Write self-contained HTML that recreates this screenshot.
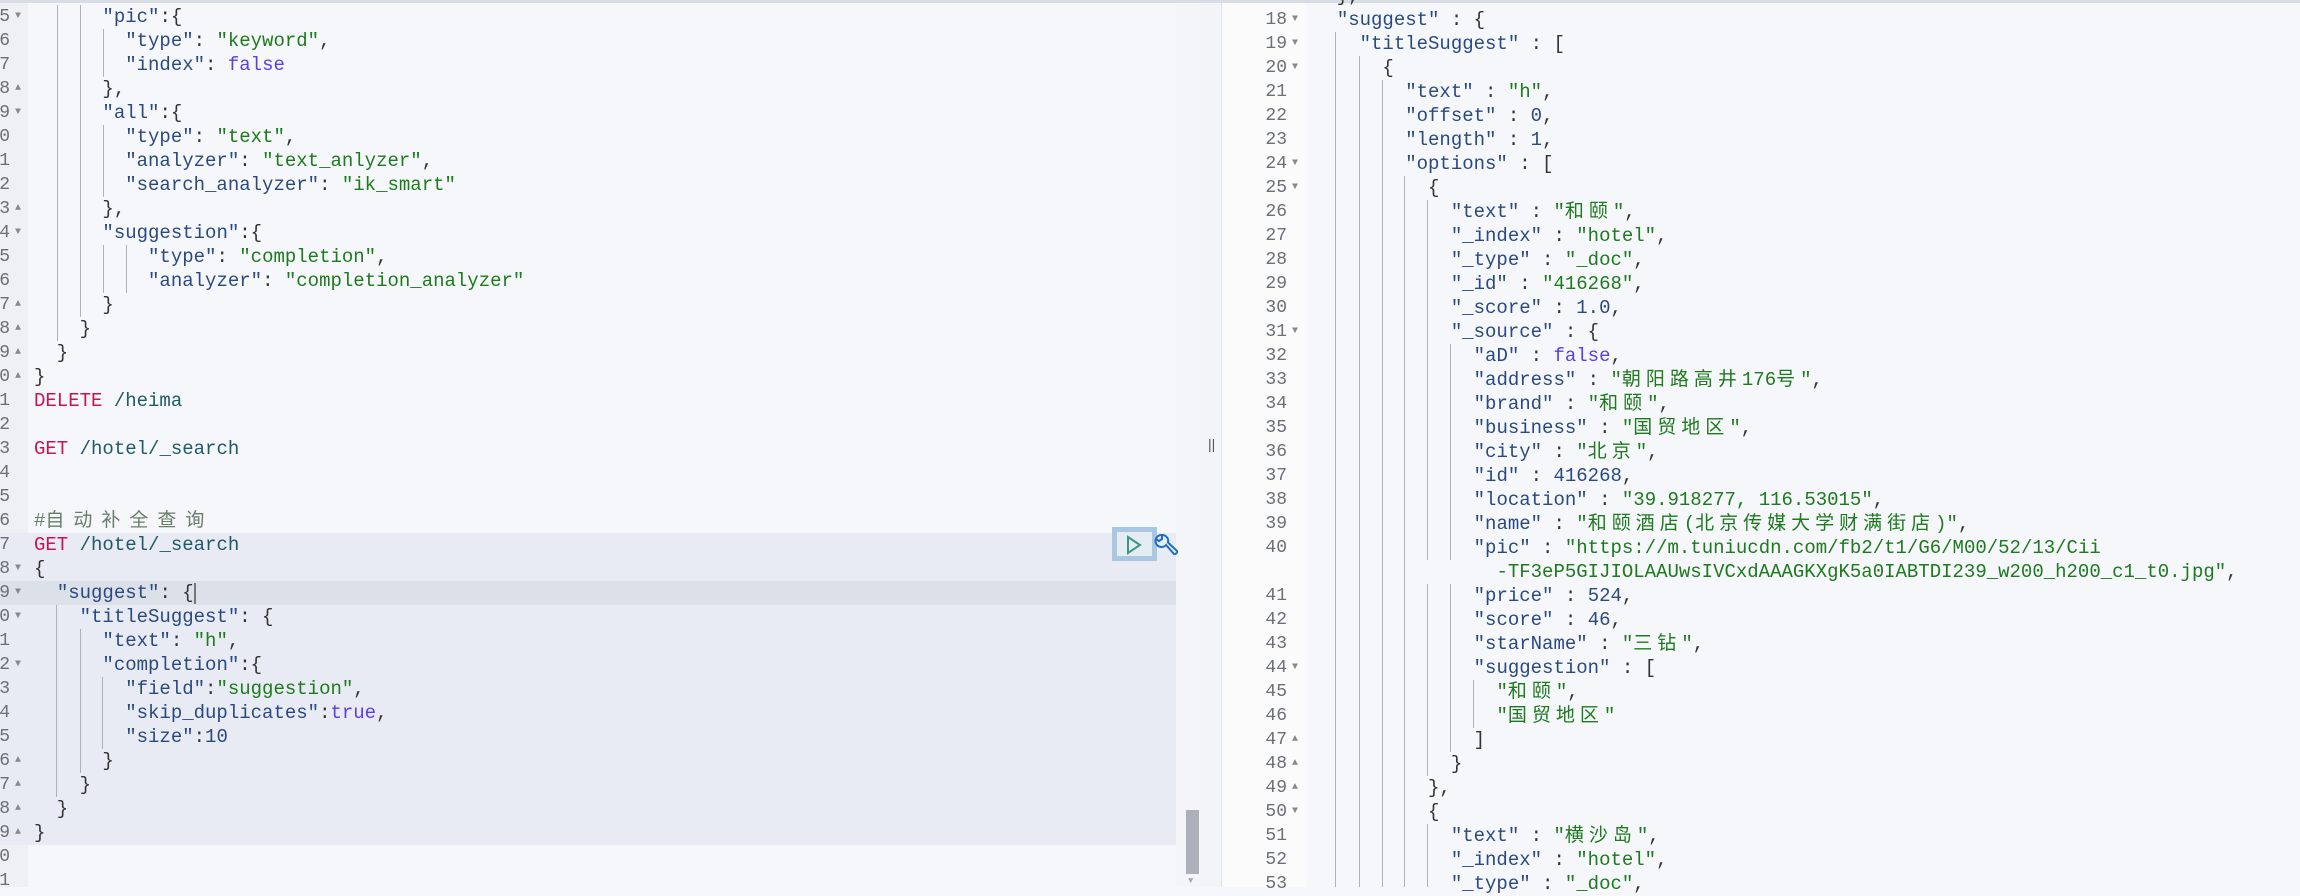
<!DOCTYPE html>
<html><head><meta charset="utf-8"><style>
*{margin:0;padding:0;box-sizing:border-box}
body{width:2300px;height:887px;overflow:hidden;background:#f5f7fa;position:relative;font-family:"Liberation Mono","Noto Sans CJK SC",monospace;font-size:19px;color:#333}
.a{position:absolute}
.l{position:absolute;height:24px;line-height:24px;white-space:pre}
.k{color:#2a4a7f}.s{color:#1d7a1d}.c{color:#6a7d6a}.b{color:#5b3ee6}.m{color:#c4155a}.p{color:#1e5a66}.n{color:#2a4a7f}
.z{letter-spacing:5px}
.g{position:absolute;width:1px;background:#aeb2ba}
.num{position:absolute;height:24px;line-height:24px;color:#6b6f76;text-align:right;width:60px;font-size:18px}
.f{position:absolute;color:#888;font-size:10px;height:24px;line-height:24px}
</style></head><body>
<div class="a" style="left:0;top:0;width:2300px;height:3px;background:#d8dce4"></div>
<div class="a" style="left:0;top:3px;width:28px;height:884px;background:#eef0f4"></div>
<div class="a" style="left:0;top:533px;width:1176px;height:312px;background:#e8ebf3"></div>
<div class="a" style="left:0;top:581px;width:1176px;height:24px;background:#dce0e9"></div>
<div class="a" style="left:1176px;top:3px;width:24px;height:884px;background:#f3f5f8"></div>
<div class="a" style="left:1186px;top:810px;width:13px;height:64px;background:#acb0b8"></div>
<div class="a" style="left:1188px;top:876px;color:#aaa;font-size:9px">▼</div>
<div class="a" style="left:1200px;top:3px;width:22px;height:884px;background:#f3f4f7;border-right:1px solid #e0e3e8"></div>
<div class="a" style="left:1208px;top:436px;font-size:14px;color:#555;font-family:'Liberation Sans',sans-serif">||</div>
<div class="a" style="left:1223px;top:3px;width:84px;height:884px;background:#fbfbfc"></div>

<div class="a" style="left:-50px;top:0;width:0;height:0">
<div class="num" style="left:0;top:5px">15</div><div class="num" style="left:0;top:29px">16</div><div class="num" style="left:0;top:53px">17</div><div class="num" style="left:0;top:77px">18</div><div class="num" style="left:0;top:101px">19</div><div class="num" style="left:0;top:125px">20</div><div class="num" style="left:0;top:149px">21</div><div class="num" style="left:0;top:173px">22</div><div class="num" style="left:0;top:197px">23</div><div class="num" style="left:0;top:221px">24</div><div class="num" style="left:0;top:245px">25</div><div class="num" style="left:0;top:269px">26</div><div class="num" style="left:0;top:293px">27</div><div class="num" style="left:0;top:317px">28</div><div class="num" style="left:0;top:341px">29</div><div class="num" style="left:0;top:365px">30</div><div class="num" style="left:0;top:389px">31</div><div class="num" style="left:0;top:413px">32</div><div class="num" style="left:0;top:437px">33</div><div class="num" style="left:0;top:461px">34</div><div class="num" style="left:0;top:485px">35</div><div class="num" style="left:0;top:509px">36</div><div class="num" style="left:0;top:533px">37</div><div class="num" style="left:0;top:557px">38</div><div class="num" style="left:0;top:581px">39</div><div class="num" style="left:0;top:605px">40</div><div class="num" style="left:0;top:629px">41</div><div class="num" style="left:0;top:653px">42</div><div class="num" style="left:0;top:677px">43</div><div class="num" style="left:0;top:701px">44</div><div class="num" style="left:0;top:725px">45</div><div class="num" style="left:0;top:749px">46</div><div class="num" style="left:0;top:773px">47</div><div class="num" style="left:0;top:797px">48</div><div class="num" style="left:0;top:821px">49</div><div class="num" style="left:0;top:845px">50</div><div class="num" style="left:0;top:869px">51</div>
</div>
<div class="f" style="left:15px;top:5px">▼</div><div class="f" style="left:15px;top:77px">▲</div><div class="f" style="left:15px;top:101px">▼</div><div class="f" style="left:15px;top:197px">▲</div><div class="f" style="left:15px;top:221px">▼</div><div class="f" style="left:15px;top:293px">▲</div><div class="f" style="left:15px;top:317px">▲</div><div class="f" style="left:15px;top:341px">▲</div><div class="f" style="left:15px;top:365px">▲</div><div class="f" style="left:15px;top:557px">▼</div><div class="f" style="left:15px;top:581px">▼</div><div class="f" style="left:15px;top:605px">▼</div><div class="f" style="left:15px;top:653px">▼</div><div class="f" style="left:15px;top:749px">▲</div><div class="f" style="left:15px;top:773px">▲</div><div class="f" style="left:15px;top:797px">▲</div><div class="f" style="left:15px;top:821px">▲</div>

<div class="g" style="left:57px;top:5px;height:336px"></div>
<div class="g" style="left:80px;top:5px;height:312px"></div>
<div class="g" style="left:103px;top:29px;height:48px"></div>
<div class="g" style="left:103px;top:125px;height:72px"></div>
<div class="g" style="left:103px;top:245px;height:48px"></div>
<div class="g" style="left:126px;top:245px;height:48px"></div>
<div class="g" style="left:56px;top:605px;height:192px"></div>
<div class="g" style="left:80px;top:629px;height:144px"></div>
<div class="g" style="left:102px;top:677px;height:72px"></div>

<div class="a" style="left:34px;top:0">
<div class="l" style="top:5px">      <span class="k">"pic"</span>:{</div>
<div class="l" style="top:29px">        <span class="k">"type"</span>: <span class="s">"keyword"</span>,</div>
<div class="l" style="top:53px">        <span class="k">"index"</span>: <span class="b">false</span></div>
<div class="l" style="top:77px">      },</div>
<div class="l" style="top:101px">      <span class="k">"all"</span>:{</div>
<div class="l" style="top:125px">        <span class="k">"type"</span>: <span class="s">"text"</span>,</div>
<div class="l" style="top:149px">        <span class="k">"analyzer"</span>: <span class="s">"text_anlyzer"</span>,</div>
<div class="l" style="top:173px">        <span class="k">"search_analyzer"</span>: <span class="s">"ik_smart"</span></div>
<div class="l" style="top:197px">      },</div>
<div class="l" style="top:221px">      <span class="k">"suggestion"</span>:{</div>
<div class="l" style="top:245px">          <span class="k">"type"</span>: <span class="s">"completion"</span>,</div>
<div class="l" style="top:269px">          <span class="k">"analyzer"</span>: <span class="s">"completion_analyzer"</span></div>
<div class="l" style="top:293px">      }</div>
<div class="l" style="top:317px">    }</div>
<div class="l" style="top:341px">  }</div>
<div class="l" style="top:365px">}</div>
<div class="l" style="top:389px"><span class="m">DELETE</span> <span class="p">/heima</span></div>
<div class="l" style="top:437px"><span class="m">GET</span> <span class="p">/hotel/_search</span></div>
<div class="l c" style="top:509px">#<span style="letter-spacing:9px">自动补全查询</span></div>
<div class="l" style="top:533px"><span class="m">GET</span> <span class="p">/hotel/_search</span></div>
<div class="l" style="top:557px">{</div>
<div class="l" style="top:581px">  <span class="k">"suggest"</span>: {</div>
<div class="l" style="top:605px">    <span class="k">"titleSuggest"</span>: {</div>
<div class="l" style="top:629px">      <span class="k">"text"</span>: <span class="s">"h"</span>,</div>
<div class="l" style="top:653px">      <span class="k">"completion"</span>:{</div>
<div class="l" style="top:677px">        <span class="k">"field"</span>:<span class="s">"suggestion"</span>,</div>
<div class="l" style="top:701px">        <span class="k">"skip_duplicates"</span>:<span class="b">true</span>,</div>
<div class="l" style="top:725px">        <span class="k">"size"</span>:<span class="n">10</span></div>
<div class="l" style="top:749px">      }</div>
<div class="l" style="top:773px">    }</div>
<div class="l" style="top:797px">  }</div>
<div class="l" style="top:821px">}</div>
</div>
<div class="a" style="left:194px;top:583px;width:2px;height:21px;background:#777"></div>

<div class="a" style="left:1112px;top:527px;width:45px;height:34px;background:#a9c7e0"></div>
<div class="a" style="left:1117px;top:532px;width:35px;height:24px;background:#e6ecf4"></div>
<svg class="a" style="left:1125px;top:535px" width="18" height="20" viewBox="0 0 18 20"><path d="M3 2 L15 10 L3 18 Z" fill="none" stroke="#3a9a7e" stroke-width="2"/></svg>
<svg class="a" style="left:1153px;top:533px" width="26" height="26" viewBox="0 0 26 26"><path d="M9 2 A6 6 0 1 0 13 12 L21 21 A2.5 2.5 0 0 0 24 18 L15 9.5 A6 6 0 0 0 9 2 L9 6 L6 8 L3 6" fill="none" stroke="#1f6fc0" stroke-width="2"/></svg>

<div class="a" style="left:1236px;top:0;width:0;height:0">
<div class="num" style="left:-9px;top:8px">18</div><div class="num" style="left:-9px;top:32px">19</div><div class="num" style="left:-9px;top:56px">20</div><div class="num" style="left:-9px;top:80px">21</div><div class="num" style="left:-9px;top:104px">22</div><div class="num" style="left:-9px;top:128px">23</div><div class="num" style="left:-9px;top:152px">24</div><div class="num" style="left:-9px;top:176px">25</div><div class="num" style="left:-9px;top:200px">26</div><div class="num" style="left:-9px;top:224px">27</div><div class="num" style="left:-9px;top:248px">28</div><div class="num" style="left:-9px;top:272px">29</div><div class="num" style="left:-9px;top:296px">30</div><div class="num" style="left:-9px;top:320px">31</div><div class="num" style="left:-9px;top:344px">32</div><div class="num" style="left:-9px;top:368px">33</div><div class="num" style="left:-9px;top:392px">34</div><div class="num" style="left:-9px;top:416px">35</div><div class="num" style="left:-9px;top:440px">36</div><div class="num" style="left:-9px;top:464px">37</div><div class="num" style="left:-9px;top:488px">38</div><div class="num" style="left:-9px;top:512px">39</div><div class="num" style="left:-9px;top:536px">40</div><div class="num" style="left:-9px;top:584px">41</div><div class="num" style="left:-9px;top:608px">42</div><div class="num" style="left:-9px;top:632px">43</div><div class="num" style="left:-9px;top:656px">44</div><div class="num" style="left:-9px;top:680px">45</div><div class="num" style="left:-9px;top:704px">46</div><div class="num" style="left:-9px;top:728px">47</div><div class="num" style="left:-9px;top:752px">48</div><div class="num" style="left:-9px;top:776px">49</div><div class="num" style="left:-9px;top:800px">50</div><div class="num" style="left:-9px;top:824px">51</div><div class="num" style="left:-9px;top:848px">52</div><div class="num" style="left:-9px;top:872px">53</div>
</div>
<div class="f" style="left:1292px;top:8px">▼</div><div class="f" style="left:1292px;top:32px">▼</div><div class="f" style="left:1292px;top:56px">▼</div><div class="f" style="left:1292px;top:152px">▼</div><div class="f" style="left:1292px;top:176px">▼</div><div class="f" style="left:1292px;top:320px">▼</div><div class="f" style="left:1292px;top:656px">▼</div><div class="f" style="left:1292px;top:728px">▲</div><div class="f" style="left:1292px;top:752px">▲</div><div class="f" style="left:1292px;top:776px">▲</div><div class="f" style="left:1292px;top:800px">▼</div>

<div class="g" style="left:1335px;top:32px;height:855px"></div>
<div class="g" style="left:1359px;top:56px;height:831px"></div>
<div class="g" style="left:1382px;top:80px;height:807px"></div>
<div class="g" style="left:1404px;top:176px;height:711px"></div>
<div class="g" style="left:1427px;top:200px;height:360px"></div>
<div class="g" style="left:1427px;top:584px;height:192px"></div>
<div class="g" style="left:1427px;top:824px;height:63px"></div>
<div class="g" style="left:1450px;top:344px;height:216px"></div>
<div class="g" style="left:1450px;top:584px;height:168px"></div>
<div class="g" style="left:1473px;top:680px;height:48px"></div>

<div class="a" style="left:1314px;top:0">
<div class="l" style="top:-16px">  },</div>
<div class="l" style="top:8px">  <span class="k">"suggest"</span> : {</div>
<div class="l" style="top:32px">    <span class="k">"titleSuggest"</span> : [</div>
<div class="l" style="top:56px">      {</div>
<div class="l" style="top:80px">        <span class="k">"text"</span> : <span class="s">"h"</span>,</div>
<div class="l" style="top:104px">        <span class="k">"offset"</span> : <span class="n">0</span>,</div>
<div class="l" style="top:128px">        <span class="k">"length"</span> : <span class="n">1</span>,</div>
<div class="l" style="top:152px">        <span class="k">"options"</span> : [</div>
<div class="l" style="top:176px">          {</div>
<div class="l" style="top:200px">            <span class="k">"text"</span> : <span class="s">"<span class="z">和颐</span>"</span>,</div>
<div class="l" style="top:224px">            <span class="k">"_index"</span> : <span class="s">"hotel"</span>,</div>
<div class="l" style="top:248px">            <span class="k">"_type"</span> : <span class="s">"_doc"</span>,</div>
<div class="l" style="top:272px">            <span class="k">"_id"</span> : <span class="s">"416268"</span>,</div>
<div class="l" style="top:296px">            <span class="k">"_score"</span> : <span class="n">1.0</span>,</div>
<div class="l" style="top:320px">            <span class="k">"_source"</span> : {</div>
<div class="l" style="top:344px">              <span class="k">"aD"</span> : <span class="b">false</span>,</div>
<div class="l" style="top:368px">              <span class="k">"address"</span> : <span class="s">"<span class="z">朝阳路高井</span>176<span class="z">号</span>"</span>,</div>
<div class="l" style="top:392px">              <span class="k">"brand"</span> : <span class="s">"<span class="z">和颐</span>"</span>,</div>
<div class="l" style="top:416px">              <span class="k">"business"</span> : <span class="s">"<span class="z">国贸地区</span>"</span>,</div>
<div class="l" style="top:440px">              <span class="k">"city"</span> : <span class="s">"<span class="z">北京</span>"</span>,</div>
<div class="l" style="top:464px">              <span class="k">"id"</span> : <span class="n">416268</span>,</div>
<div class="l" style="top:488px">              <span class="k">"location"</span> : <span class="s">"39.918277, 116.53015"</span>,</div>
<div class="l" style="top:512px">              <span class="k">"name"</span> : <span class="s">"<span class="z">和颐酒店</span>(<span class="z">北京传媒大学财满街店</span>)"</span>,</div>
<div class="l" style="top:536px">              <span class="k">"pic"</span> : <span class="s">"https://m.tuniucdn.com/fb2/t1/G6/M00/52/13/Cii</span></div>
<div class="l" style="top:560px">                <span class="s">-TF3eP5GIJIOLAAUwsIVCxdAAAGKXgK5a0IABTDI239_w200_h200_c1_t0.jpg"</span>,</div>
<div class="l" style="top:584px">              <span class="k">"price"</span> : <span class="n">524</span>,</div>
<div class="l" style="top:608px">              <span class="k">"score"</span> : <span class="n">46</span>,</div>
<div class="l" style="top:632px">              <span class="k">"starName"</span> : <span class="s">"<span class="z">三钻</span>"</span>,</div>
<div class="l" style="top:656px">              <span class="k">"suggestion"</span> : [</div>
<div class="l" style="top:680px">                <span class="s">"<span class="z">和颐</span>"</span>,</div>
<div class="l" style="top:704px">                <span class="s">"<span class="z">国贸地区</span>"</span></div>
<div class="l" style="top:728px">              ]</div>
<div class="l" style="top:752px">            }</div>
<div class="l" style="top:776px">          },</div>
<div class="l" style="top:800px">          {</div>
<div class="l" style="top:824px">            <span class="k">"text"</span> : <span class="s">"<span class="z">横沙岛</span>"</span>,</div>
<div class="l" style="top:848px">            <span class="k">"_index"</span> : <span class="s">"hotel"</span>,</div>
<div class="l" style="top:872px">            <span class="k">"_type"</span> : <span class="s">"_doc"</span>,</div>
</div>
</body></html>
